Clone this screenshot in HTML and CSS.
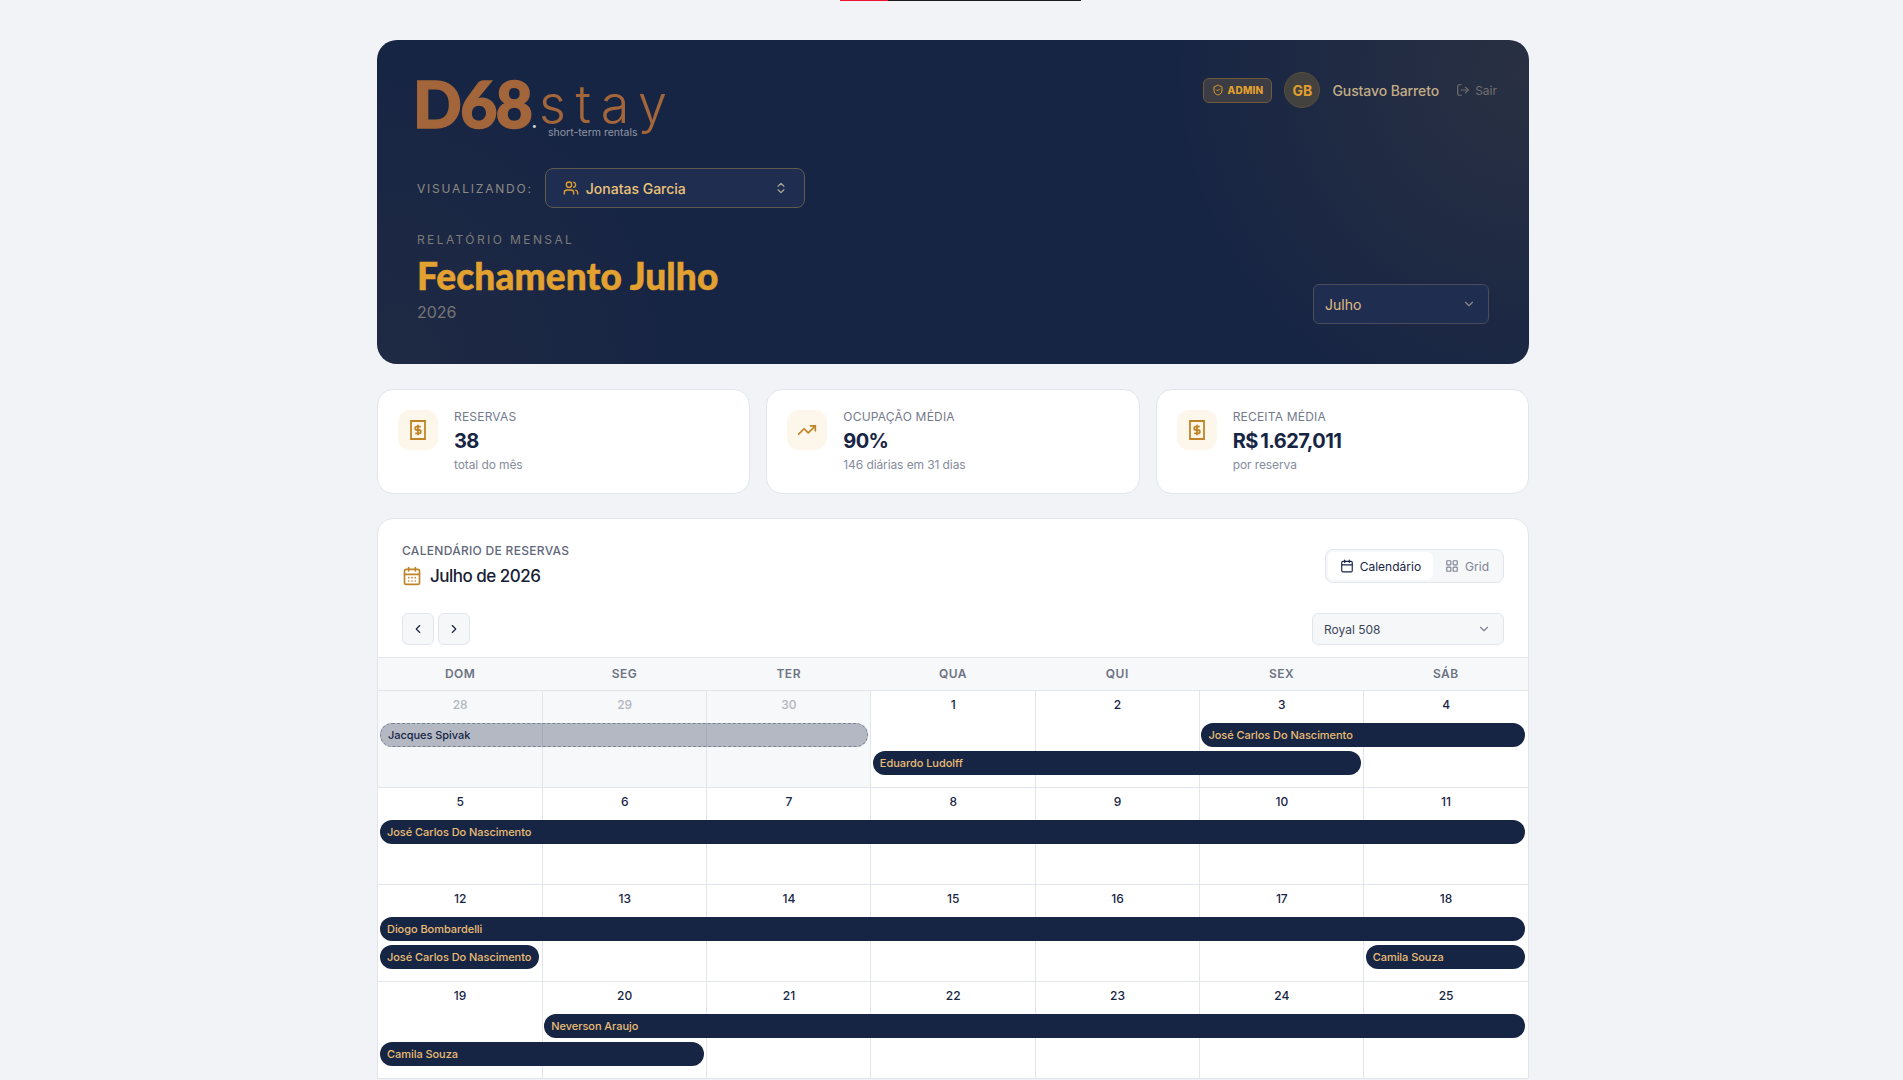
FILE: index.html
```html
<!DOCTYPE html>
<html lang="pt-BR">
<head>
    <meta charset="UTF-8">
    <meta name="viewport" content="width=device-width, initial-scale=1.0">
    <title>Fechamento Julho - D68 Stay</title>
    <link rel="stylesheet" href="styles.css">
</head>
<body>
    <div class="top-progress"><div class="top-progress-fill"></div></div>

    <div class="container">
        <header class="hero">
            <div class="hero-top">
                <div class="logo">
                    <span class="logo-mark">D68</span><span class="logo-dot">.</span><span class="logo-stay">stay</span>
                    <span class="logo-tag">short-term rentals</span>
                </div>
                <div class="user-box">
                    <span class="admin-badge">
                        <svg class="icon-12" viewBox="0 0 24 24"><path d="M20 13c0 5-3.5 7.5-7.66 8.95a1 1 0 0 1-.67-.01C7.5 20.5 4 18 4 13V6a1 1 0 0 1 1-1c2 0 4.5-1.2 6.24-2.72a1.17 1.17 0 0 1 1.52 0C14.51 3.81 17 5 19 5a1 1 0 0 1 1 1z"/><path d="m9 12 2 2 4-4"/></svg>
                        ADMIN
                    </span>
                    <span class="avatar">GB</span>
                    <span class="user-name">Gustavo Barreto</span>
                    <span class="logout">
                        <svg class="icon-14" viewBox="0 0 24 24"><path d="M9 21H5a2 2 0 0 1-2-2V5a2 2 0 0 1 2-2h4"/><path d="m16 17 5-5-5-5"/><path d="M21 12H9"/></svg>
                        Sair
                    </span>
                </div>
            </div>

            <div class="viewer-row">
                <span class="viewer-label">VISUALIZANDO:</span>
                <div class="viewer-select">
                    <svg class="icon-16 gold" viewBox="0 0 24 24"><path d="M16 21v-2a4 4 0 0 0-4-4H6a4 4 0 0 0-4 4v2"/><circle cx="9" cy="7" r="4"/><path d="M22 21v-2a4 4 0 0 0-3-3.87"/><path d="M16 3.13a4 4 0 0 1 0 7.75"/></svg>
                    <span class="viewer-name">Jonatas Garcia</span>
                    <svg class="icon-14 viewer-caret" viewBox="0 0 24 24"><path d="m7 15 5 5 5-5"/><path d="m7 9 5-5 5 5"/></svg>
                </div>
            </div>

            <div class="hero-bottom">
                <div>
                    <div class="hero-eyebrow">RELATÓRIO MENSAL</div>
                    <h1>Fechamento Julho</h1>
                    <div class="hero-year">2026</div>
                </div>
                <div class="month-select">
                    <span>Julho</span>
                    <svg class="icon-14" viewBox="0 0 24 24"><path d="m6 9 6 6 6-6"/></svg>
                </div>
            </div>
        </header>

        <section class="stats-grid">
            <div class="stat-card">
                <div class="stat-icon">
                    <svg class="icon-20 icon-stamp" viewBox="0 0 20 20"><path d="M3 1h14v18H3z"/><path d="M12.8 6.6H8.9a1.7 1.7 0 0 0 0 3.4h2.2a1.7 1.7 0 0 1 0 3.4H7.2"/><path d="M10 4.8v10.4"/></svg>
                </div>
                <div>
                    <div class="stat-label">RESERVAS</div>
                    <div class="stat-number">38</div>
                    <div class="stat-note">total do mês</div>
                </div>
            </div>
            <div class="stat-card">
                <div class="stat-icon">
                    <svg class="icon-20" viewBox="0 0 24 24"><path d="M16 7h6v6"/><path d="m22 7-8.5 8.5-5-5L2 17"/></svg>
                </div>
                <div>
                    <div class="stat-label">OCUPAÇÃO MÉDIA</div>
                    <div class="stat-number">90%</div>
                    <div class="stat-note">146 diárias em 31 dias</div>
                </div>
            </div>
            <div class="stat-card">
                <div class="stat-icon">
                    <svg class="icon-20 icon-stamp" viewBox="0 0 20 20"><path d="M3 1h14v18H3z"/><path d="M12.8 6.6H8.9a1.7 1.7 0 0 0 0 3.4h2.2a1.7 1.7 0 0 1 0 3.4H7.2"/><path d="M10 4.8v10.4"/></svg>
                </div>
                <div>
                    <div class="stat-label">RECEITA MÉDIA</div>
                    <div class="stat-number">R$ 1.627,011</div>
                    <div class="stat-note">por reserva</div>
                </div>
            </div>
        </section>

        <section class="calendar-card">
            <div class="calendar-head">
                <div>
                    <div class="calendar-eyebrow">CALENDÁRIO DE RESERVAS</div>
                    <div class="calendar-title">
                        <svg class="icon-20 gold-dark" viewBox="0 0 24 24"><path d="M8 2v4"/><path d="M16 2v4"/><rect x="3" y="4" width="18" height="18" rx="2"/><path d="M3 10h18"/><path d="M8 14h.01M12 14h.01M16 14h.01M8 18h.01M12 18h.01M16 18h.01"/></svg>
                        <span>Julho de 2026</span>
                    </div>
                </div>
                <div class="view-toggle">
                    <div class="toggle-btn active">
                        <svg class="icon-14" viewBox="0 0 24 24"><path d="M8 2v4"/><path d="M16 2v4"/><rect x="3" y="4" width="18" height="18" rx="2"/><path d="M3 10h18"/></svg>
                        Calendário
                    </div>
                    <div class="toggle-btn">
                        <svg class="icon-14" viewBox="0 0 24 24"><rect x="3" y="3" width="7" height="7" rx="1"/><rect x="14" y="3" width="7" height="7" rx="1"/><rect x="14" y="14" width="7" height="7" rx="1"/><rect x="3" y="14" width="7" height="7" rx="1"/></svg>
                        Grid
                    </div>
                </div>
            </div>

            <div class="calendar-tools">
                <div class="nav-btns">
                    <button class="nav-btn"><svg class="icon-14" viewBox="0 0 24 24"><path d="m15 18-6-6 6-6"/></svg></button>
                    <button class="nav-btn"><svg class="icon-14" viewBox="0 0 24 24"><path d="m9 18 6-6-6-6"/></svg></button>
                </div>
                <div class="unit-select">
                    <span>Royal 508</span>
                    <svg class="icon-14" viewBox="0 0 24 24"><path d="m6 9 6 6 6-6"/></svg>
                </div>
            </div>

            <div class="weekdays">
                <div>DOM</div><div>SEG</div><div>TER</div><div>QUA</div><div>QUI</div><div>SEX</div><div>SÁB</div>
            </div>

            <div class="week">
                <div class="day muted">28</div><div class="day muted">29</div><div class="day muted">30</div><div class="day">1</div><div class="day">2</div><div class="day">3</div><div class="day">4</div>
                <div class="bar bar-pending bar-row-1" style="grid-column: 1 / span 3">Jacques Spivak</div>
                <div class="bar bar-row-1" style="grid-column: 6 / span 2">José Carlos Do Nascimento</div>
                <div class="bar bar-row-2" style="grid-column: 4 / span 3">Eduardo Ludolff</div>
            </div>

            <div class="week">
                <div class="day">5</div><div class="day">6</div><div class="day">7</div><div class="day">8</div><div class="day">9</div><div class="day">10</div><div class="day">11</div>
                <div class="bar bar-row-1" style="grid-column: 1 / span 7">José Carlos Do Nascimento</div>
            </div>

            <div class="week">
                <div class="day">12</div><div class="day">13</div><div class="day">14</div><div class="day">15</div><div class="day">16</div><div class="day">17</div><div class="day">18</div>
                <div class="bar bar-row-1" style="grid-column: 1 / span 7">Diogo Bombardelli</div>
                <div class="bar bar-row-2" style="grid-column: 1 / span 1">José Carlos Do Nascimento</div>
                <div class="bar bar-row-2" style="grid-column: 7 / span 1">Camila Souza</div>
            </div>

            <div class="week">
                <div class="day">19</div><div class="day">20</div><div class="day">21</div><div class="day">22</div><div class="day">23</div><div class="day">24</div><div class="day">25</div>
                <div class="bar bar-row-1" style="grid-column: 2 / span 6">Neverson Araujo</div>
                <div class="bar bar-row-2" style="grid-column: 1 / span 2">Camila Souza</div>
            </div>
        </section>
    </div>
</body>
</html>
```

FILE: styles.css
```css
html, body {
    height: 100%;
    overflow: hidden;
}
body {
    margin: 0;
    background: #f1f3f7;
    color: #172544;
    font-family: Inter, 'Noto Sans', sans-serif;
}
svg {
    fill: none;
    stroke: currentColor;
    stroke-width: 2;
    stroke-linecap: round;
    stroke-linejoin: round;
    flex-shrink: 0;
}
.icon-12 { width: 12px; height: 12px; }
.icon-14 { width: 14px; height: 14px; }
.icon-16 { width: 16px; height: 16px; }
.icon-20 { width: 20px; height: 20px; }
.icon-stamp {
    stroke-width: 1.8;
    stroke-linecap: butt;
    stroke-linejoin: miter;
}
.gold { color: #e0a030; }
.gold-dark { color: #c08428; }

/* strip at the very top of the window */
.top-progress {
    position: absolute;
    top: 0;
    left: 840px;
    width: 241px;
    height: 1px;
    background: #1c1c1c;
}
.top-progress-fill {
    width: 48px;
    height: 1px;
    background: #f0122d;
}

.container {
    width: 1152px;
    margin: 0 auto;
    padding: 40px 0 0 3px;
}

/* hero */
.hero {
    height: 324px;
    box-sizing: border-box;
    padding: 32px 40px 40px;
    border-radius: 20px;
    background:
        radial-gradient(circle at 100% 10%, rgba(224, 160, 48, 0.09) 0%, rgba(224, 160, 48, 0) 30%),
        radial-gradient(circle at 0% 100%, rgba(224, 160, 48, 0.04) 0%, rgba(224, 160, 48, 0) 25%),
        #172544;
}
.hero-top {
    display: flex;
    justify-content: space-between;
    align-items: flex-start;
}
.logo {
    position: relative;
    height: 57px;
    margin: 8px 0 0 -4px;
    color: #a3653a;
    line-height: 48px;
    white-space: nowrap;
}
.logo-mark {
    font-family: Lato, sans-serif;
    font-weight: 900;
    font-size: 64px;
    letter-spacing: -1.5px;
    -webkit-text-stroke: 1.6px #a3653a;
}
.logo-dot {
    color: #cfd4de;
    font-size: 16px;
    font-weight: 800;
    margin: 0 2px 0 0;
}
.logo-stay {
    font-family: Inter, sans-serif;
    font-weight: 300;
    font-size: 52px;
    letter-spacing: 9.5px;
    vertical-align: 5px;
}
.logo-tag {
    position: absolute;
    left: 135px;
    top: 47px;
    font-size: 10.5px;
    line-height: 12px;
    color: #8f95a5;
}
.user-box {
    display: flex;
    align-items: center;
    margin-right: -8px;
}
.admin-badge {
    display: flex;
    align-items: center;
    gap: 4px;
    height: 25px;
    box-sizing: border-box;
    padding: 0 8px;
    border: 1px solid #6d5b3c;
    border-radius: 6px;
    background: #3c3c44;
    color: #e0a030;
    font-size: 10px;
    font-weight: 800;
    letter-spacing: 0.2px;
}
.avatar {
    display: flex;
    align-items: center;
    justify-content: center;
    width: 36px;
    height: 36px;
    box-sizing: border-box;
    margin-left: 12px;
    border: 1px solid #57503f;
    border-radius: 50%;
    background: #44423f;
    color: #e0a030;
    font-size: 14px;
    font-weight: 700;
}
.user-name {
    margin-left: 12px;
    color: #c2ac86;
    font-size: 14px;
    font-weight: 500;
    letter-spacing: -0.1px;
}
.logout {
    display: flex;
    align-items: center;
    gap: 5px;
    margin-left: 17px;
    color: #736f6e;
    font-size: 12px;
}

.viewer-row {
    display: flex;
    align-items: center;
    gap: 12px;
    margin-top: 31px;
}
.viewer-label {
    color: #8d8a83;
    font-size: 12px;
    font-weight: 400;
    letter-spacing: 1.8px;
}
.viewer-select {
    display: flex;
    align-items: center;
    width: 260px;
    height: 40px;
    box-sizing: border-box;
    padding: 0 16px 0 17px;
    border: 1px solid #5f5a4c;
    border-radius: 8px;
    background: #1f2e50;
}
.viewer-name {
    flex: 1;
    margin-left: 7px;
    color: #ecc27a;
    font-size: 14px;
    font-weight: 500;
}
.viewer-caret { color: #b3ab98; }

.hero-bottom {
    display: flex;
    justify-content: space-between;
    align-items: flex-end;
    margin-top: 24px;
}
.hero-eyebrow {
    color: #7d7b78;
    font-size: 12px;
    font-weight: 400;
    line-height: 16px;
    letter-spacing: 2.4px;
}
h1 {
    margin: 6px 0 0;
    color: #e3a12f;
    font-family: Lato, sans-serif;
    font-size: 37px;
    font-weight: 900;
    line-height: 44px;
    letter-spacing: 0.1px;
    -webkit-text-stroke: 0.5px #e3a12f;
}
.hero-year {
    margin-top: 2px;
    color: #767676;
    font-size: 16px;
    line-height: 24px;
}
.month-select {
    display: flex;
    align-items: center;
    justify-content: space-between;
    width: 176px;
    height: 40px;
    box-sizing: border-box;
    padding: 0 12px 0 11px;
    border: 1px solid #4a4c58;
    border-radius: 6px;
    background: #1f2e50;
    color: #e0bd80;
    font-size: 14px;
}
.month-select svg { color: #8c8a84; }

/* stats */
.stats-grid {
    display: grid;
    grid-template-columns: repeat(3, 1fr);
    gap: 16px;
    margin-top: 25px;
}
.stat-card {
    display: flex;
    gap: 16px;
    height: 105px;
    box-sizing: border-box;
    padding: 20px;
    border: 1px solid #e2e5ec;
    border-radius: 16px;
    background: #fff;
}
.stat-icon {
    display: flex;
    align-items: center;
    justify-content: center;
    width: 40px;
    height: 40px;
    border-radius: 12px;
    background: #fdf6ea;
    color: #c08428;
}
.stat-label {
    margin-top: -1px;
    color: #737a8c;
    font-size: 12px;
    line-height: 16px;
    letter-spacing: 0.2px;
}
.stat-number {
    margin-top: 2px;
    font-size: 20px;
    font-weight: 700;
    line-height: 28px;
    letter-spacing: -0.6px;
    word-spacing: -1.5px;
    color: #172544;
}
.stat-note {
    margin-top: 2px;
    color: #868c9b;
    font-size: 12px;
    line-height: 16px;
    letter-spacing: -0.1px;
}

/* calendar */
.calendar-card {
    margin-top: 24px;
    border: 1px solid #e2e5ec;
    border-radius: 16px 16px 0 0;
    background: #fff;
    overflow: hidden;
}
.calendar-head {
    display: flex;
    justify-content: space-between;
    align-items: flex-start;
    padding: 24px 24px 0;
}
.calendar-eyebrow {
    color: #5f6779;
    font-size: 12px;
    font-weight: 500;
    line-height: 16px;
    letter-spacing: 0.3px;
}
.calendar-title {
    display: flex;
    align-items: center;
    gap: 8px;
    margin-top: 3px;
    font-size: 17px;
    font-weight: 500;
    line-height: 28px;
    letter-spacing: -0.5px;
    color: #172033;
}
.view-toggle {
    display: flex;
    height: 34px;
    box-sizing: border-box;
    margin-top: 6px;
    padding: 2px;
    border: 1px solid #e2e5ec;
    border-radius: 8px;
    background: #f6f7f9;
}
.toggle-btn {
    display: flex;
    align-items: center;
    gap: 6px;
    padding: 0 12px;
    border-radius: 6px;
    color: #7d8494;
    font-size: 12px;
    font-weight: 400;
}
.toggle-btn.active {
    background: #fff;
    color: #172544;
}
.calendar-tools {
    display: flex;
    justify-content: space-between;
    align-items: center;
    padding: 23px 24px 12px;
}
.nav-btns {
    display: flex;
    gap: 4px;
}
.nav-btn {
    display: flex;
    align-items: center;
    justify-content: center;
    width: 32px;
    height: 32px;
    padding: 0;
    border: 1px solid #e2e5ec;
    border-radius: 6px;
    background: #f6f7f9;
    color: #172544;
}
.unit-select {
    display: flex;
    align-items: center;
    justify-content: space-between;
    width: 192px;
    height: 32px;
    box-sizing: border-box;
    padding: 0 12px 0 11px;
    border: 1px solid #e2e5ec;
    border-radius: 6px;
    background: #f6f7f9;
    color: #3d4659;
    font-size: 12px;
}
.unit-select svg { color: #7d8494; }

.weekdays {
    display: grid;
    grid-template-columns: repeat(7, 1fr);
    height: 32px;
    border-top: 1px solid #e2e5ec;
    background: #f7f8fa;
    color: #6d7383;
    font-size: 12px;
    font-weight: 600;
    letter-spacing: 0.5px;
    line-height: 32px;
    text-align: center;
}
.week {
    display: grid;
    grid-template-columns: repeat(7, 1fr);
    grid-template-rows: 32px 24px 28px 12px;
    border-top: 1px solid #e2e5ec;
}
.day {
    grid-row: 1 / 5;
    border-left: 1px solid #e2e5ec;
    margin-left: -0.5px;
    padding-top: 6px;
    color: #172544;
    font-size: 12px;
    font-weight: 500;
    line-height: 16px;
    text-align: center;
}
.day:nth-child(1) { grid-column: 1; border-left: none; margin-left: 0; }
.day:nth-child(2) { grid-column: 2; }
.day:nth-child(3) { grid-column: 3; }
.day:nth-child(4) { grid-column: 4; }
.day:nth-child(5) { grid-column: 5; }
.day:nth-child(6) { grid-column: 6; }
.day:nth-child(7) { grid-column: 7; }
.day.muted {
    background: #f7f8fa;
    color: #b0b5c0;
}
.bar {
    height: 24px;
    box-sizing: border-box;
    margin: 0 3px 0 2px;
    padding: 0 7px;
    border-radius: 12px;
    background: #172544;
    color: #e9bd74;
    font-size: 11px;
    font-weight: 500;
    line-height: 24px;
    letter-spacing: -0.05px;
    white-space: nowrap;
    overflow: hidden;
}
.bar-row-1 { grid-row: 2; }
.bar-row-2 { grid-row: 3; margin-top: 4px; }
.bar-pending {
    border: 1px dashed #7a8296;
    background: rgba(23, 37, 68, 0.3);
    color: #172544;
    line-height: 22px;
}
```
